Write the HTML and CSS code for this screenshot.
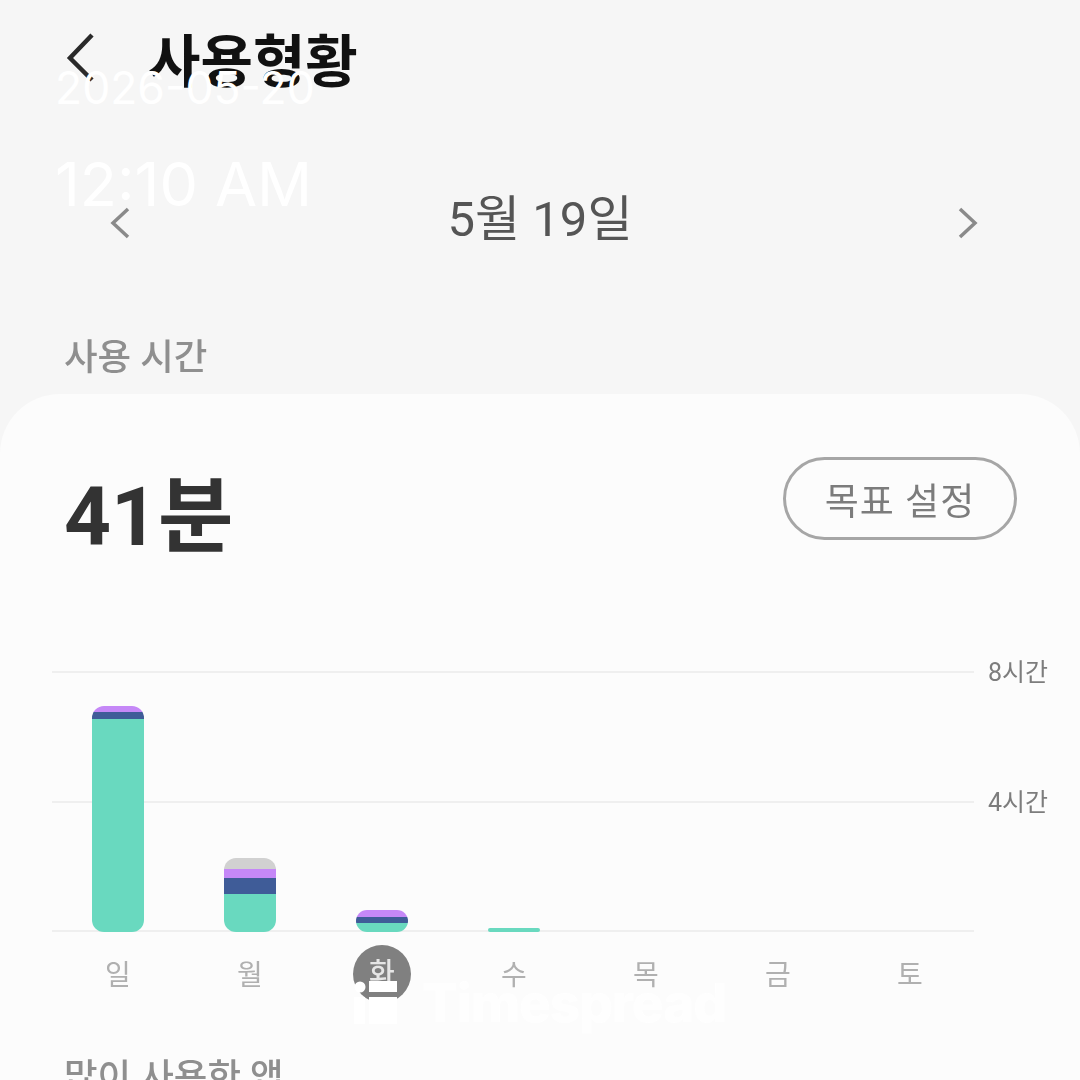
FILE: index.html
```html
<!DOCTYPE html>
<html lang="ko">
<head>
<meta charset="utf-8">
<title>사용현황</title>
<link rel="stylesheet" href="styles.css">
</head>
<body>
<div class="screen">
  <header class="top">
    <svg class="back" width="32" height="56" viewBox="0 0 32 56"><path d="M27 5 L5 28 L27 50"/></svg>
    <h1 class="title">사용형황</h1>
  </header>
  <div class="date-row">
    <svg class="chev" width="24" height="36" viewBox="0 0 24 36"><path d="M19 4 L4 18 L19 32"/></svg>
    <div class="date">5월 19일</div>
    <svg class="chev" width="24" height="36" viewBox="0 0 24 36"><path d="M5 4 L20 18 L5 32"/></svg>
  </div>
  <div class="section">사용 시간</div>
  <main class="card">
    <div class="summary">
      <div class="total">41분</div>
      <div class="goal">목표 설정</div>
    </div>
    <div class="chart">
      <div class="grid">
        <div class="grid-row"><span class="grid-label">8시간</span></div>
        <div class="grid-row short"><span class="grid-label">4시간</span></div>
        <div class="grid-row base"></div>
      </div>
      <div class="bars">
        <div class="bar"><i class="s purple h6"></i><i class="s navy h7"></i><i class="s teal h213"></i></div>
        <div class="bar"><i class="s gray h11"></i><i class="s purple h9"></i><i class="s navy h16"></i><i class="s teal h38"></i></div>
        <div class="bar"><i class="s purple h7"></i><i class="s navy h6"></i><i class="s teal h9"></i></div>
        <div class="bar thin"><i class="s teal h4"></i></div>
        <div class="bar"></div>
        <div class="bar"></div>
        <div class="bar"></div>
      </div>
    </div>
    <div class="days">
      <span class="day">일</span>
      <span class="day">월</span>
      <span class="day active">화</span>
      <span class="day">수</span>
      <span class="day">목</span>
      <span class="day">금</span>
      <span class="day">토</span>
    </div>
    <div class="section apps">많이 사용한 앱</div>
  </main>

  <div class="stamp">
    <div class="stamp-date">2026-05-20</div>
    <div class="stamp-time">12:10 AM</div>
  </div>
  <div class="mark">
    <svg class="mark-icon" width="44" height="46" viewBox="0 0 44 46"><circle cx="6" cy="7" r="5.500"/><rect x="15" y="1" width="28" height="11"/><rect x="0" y="17" width="11" height="27"/><rect x="15" y="17" width="28" height="27"/></svg>
    <span class="mark-text">Timespread</span>
  </div>
</div>
</body>
</html>
```
FILE: styles.css
```css
* { box-sizing: border-box; }
html, body { margin: 0; padding: 0; }
body {
  width: 1080px;
  height: 1080px;
  overflow: hidden;
  background: #f6f6f6;
  font-family: Roboto, "Noto Sans CJK KR", "Noto Sans", sans-serif;
}
.screen {
  position: relative;
  width: 1080px;
  height: 1080px;
  overflow: hidden;
  display: flex;
  flex-direction: column;
}
.top {
  flex: none;
  height: 116px;
  display: flex;
  align-items: center;
  padding-left: 65px;
  gap: 51px;
}
.back path { fill: none; stroke: #2a2a2a; stroke-width: 4.500; }
.title {
  margin: 10px 0 0;
  font-size: 57px;
  font-weight: 700;
  line-height: 116px;
  color: #111;
  letter-spacing: 0;
  filter: blur(.6px);
}
.date-row {
  flex: none;
  height: 72px;
  margin-top: 71px;
  padding: 0 101px 0 109px;
  display: flex;
  align-items: center;
  justify-content: space-between;
}
.chev path { fill: none; stroke: #8a8a8a; stroke-width: 3.500; }
.date {
  font-size: 49px;
  color: #555;
  line-height: 72px;
  margin-top: -7px;
  margin-left: -8px;
  filter: blur(.6px);
}
.section {
  flex: none;
  font-size: 36.500px;
  font-weight: 500;
  color: #8f8f8f;
  padding-left: 64px;
  margin-top: 71px;
  line-height: 56px;
  filter: blur(.6px);
}
.card {
  flex: none;
  margin-top: 8px;
  height: 686px;
  background: #fcfcfc;
  border-radius: 60px 60px 0 0;
  display: flex;
  flex-direction: column;
  overflow: hidden;
}
.summary {
  flex: none;
  display: flex;
  justify-content: space-between;
  align-items: flex-start;
  padding: 63px 63px 0 64px;
  height: 277px;
}
.total {
  font-size: 82px;
  font-weight: 700;
  color: #333;
  line-height: 114px;
  margin-top: 3px;
  filter: blur(.6px);
}
.goal {
  width: 234px;
  height: 83px;
  border: 3px solid #a6a6a6;
  border-radius: 42px;
  font-size: 37px;
  color: #7c7c7c;
  display: flex;
  align-items: center;
  justify-content: center;
  letter-spacing: 1px;
  filter: blur(.4px);
}
.chart { flex: none; position: relative; height: 261px; }
.grid { display: flex; flex-direction: column; }
.grid-row {
  flex: none;
  position: relative;
  height: 130px;
  margin: 0 106px 0 52px;
  border-top: 2px solid #efefef;
}
.grid-row.short { height: 129px; }
.grid-row.base { height: 2px; }
.grid-label {
  position: absolute;
  left: 936px;
  top: -18px;
  font-size: 25px;
  line-height: 36px;
  color: #7d7d7d;
  white-space: nowrap;
  filter: blur(.4px);
}
.bars {
  position: absolute;
  left: 92px;
  bottom: 0;
  height: 226px;
  display: flex;
  gap: 80px;
  align-items: flex-end;
}
.bar {
  width: 52px;
  display: flex;
  flex-direction: column;
  border-radius: 12px;
  overflow: hidden;
}
.bar.thin { border-radius: 2px; }
.s { display: block; }
.purple { background: #c588f7; }
.navy { background: #3f5c98; }
.teal { background: #69d9bf; }
.gray { background: #d1d1d1; }
.h4 { height: 4px; }
.h6 { height: 6px; }
.h7 { height: 7px; }
.h9 { height: 9px; }
.h11 { height: 11px; }
.h16 { height: 16px; }
.h38 { height: 38px; }
.h213 { height: 213px; }
.days {
  flex: none;
  display: flex;
  padding-left: 89px;
  gap: 74px;
  margin-top: 13px;
  height: 58px;
}
.day {
  width: 58px;
  height: 58px;
  border-radius: 50%;
  display: flex;
  align-items: center;
  justify-content: center;
  font-size: 28px;
  color: #b0b0b0;
  padding-bottom: 2px;
  filter: blur(.4px);
}
.day.active { background: #808080; color: #e6e6e6; font-weight: 500; padding-bottom: 6px; }
.section.apps { margin-top: 47px; }
.stamp {
  position: absolute;
  left: 55px;
  top: 58px;
  color: #fff;
  font-family: Inter, "Liberation Sans", sans-serif;
  font-weight: 400;
}
.stamp-date { font-size: 44.500px; line-height: 60px; }
.stamp-time { font-size: 61px; line-height: 72px; margin-top: 30px; }
.mark {
  position: absolute;
  left: 354px;
  top: 978px;
  display: flex;
  align-items: center;
  gap: 24px;
  color: #fff;
}
.mark-icon { fill: #fff; }
.mark-text {
  font-family: Inter, "Liberation Sans", sans-serif;
  font-weight: 800;
  font-size: 53px;
  line-height: 50px;
  letter-spacing: -1px;
  opacity: .85;
}
```
